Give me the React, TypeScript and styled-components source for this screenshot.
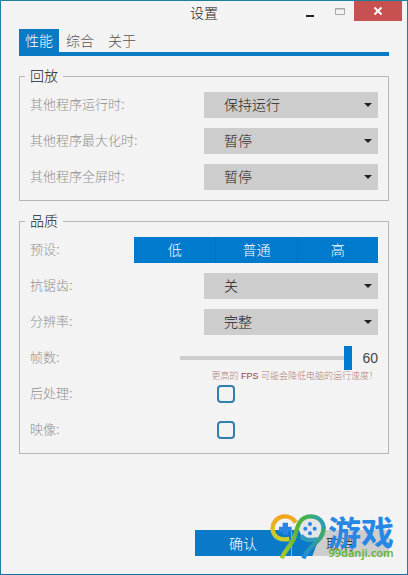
import React, { useState } from "react";
import styled, { createGlobalStyle } from "styled-components";

const Global = createGlobalStyle`
  * { box-sizing: border-box; }
  body { margin: 0; background: #f3f3f3; }
  body, button, select, input {
    font-family: "Liberation Sans", "Noto Sans CJK SC", sans-serif;
    font-weight: 300;
  }
`;

const Window = styled.div`
  min-height: 100vh;
  display: flex;
  flex-direction: column;
  background: #f3f3f3;
  border: 1px solid #1c7f9c;
  border-bottom-color: #1270b0;
`;

const TitleBar = styled.header`
  display: grid;
  grid-template-columns: 1fr auto 1fr;
  height: 28px;
`;

const Title = styled.h1`
  grid-column: 2;
  margin: 0;
  font-size: 14px;
  line-height: 24px;
  font-weight: 300;
  color: #222;
`;

const WindowButtons = styled.div`
  display: flex;
  justify-content: flex-end;
  margin-right: 5px;
`;

const WindowButton = styled.button<{ $close?: boolean }>`
  display: flex;
  align-items: center;
  justify-content: center;
  width: ${(p) => (p.$close ? 48 : 29)}px;
  height: 20px;
  padding: 0;
  border: 0;
  background: ${(p) => (p.$close ? "#c75050" : "transparent")};
`;

const Tabs = styled.nav`
  display: flex;
  margin: 0 18px;
  border-bottom: 4px solid #0a7ac4;
`;

const Tab = styled.button<{ $active: boolean }>`
  height: 23px;
  padding: 2px 6px 0;
  border: 0;
  font-size: 14px;
  line-height: 21px;
  width: ${(p) => (p.$active ? 40 : 42)}px;
  white-space: nowrap;
  background: ${(p) => (p.$active ? "#0a7ac4" : "transparent")};
  color: ${(p) => (p.$active ? "#fff" : "#555")};
`;

const Panels = styled.main`
  display: flex;
  flex-direction: column;
  gap: 10px;
  margin: 10px 18px 0;
`;

const Group = styled.fieldset`
  min-width: 0;
  margin: 0;
  padding: 1px 10px 5px;
  border: 1px solid #b4b8b8;
`;

const Legend = styled.legend`
  margin-left: -5px;
  padding: 0 5px;
  font-size: 14px;
  line-height: 20px;
  color: #222;
`;

const Row = styled.div`
  display: flex;
  align-items: center;
  justify-content: space-between;
  height: 36px;
`;

const Label = styled.label`
  font-size: 13px;
  line-height: 20px;
  color: #909090;
  white-space: nowrap;
`;

const SelectBox = styled.div`
  display: grid;
  align-items: center;
  width: 174px;
  height: 26px;
  background: #cdcdcd;
  > * { grid-area: 1 / 1; }
  > svg { justify-self: end; margin-right: 6px; pointer-events: none; }
`;

const Select = styled.select`
  width: 100%;
  height: 26px;
  padding: 0 20px;
  border: 0;
  appearance: none;
  background: transparent;
  font-size: 14px;
  color: #222;
`;

const Segments = styled.div`
  display: grid;
  grid-template-columns: repeat(3, 1fr);
  width: 244px;
  height: 26px;
`;

const Segment = styled.button`
  padding: 0;
  border: 0;
  background: #007acc;
  color: #fff;
  font-size: 14px;
  line-height: 26px;
  & + & { border-left: 1px solid #0872bb; }
`;

const SliderArea = styled.div`
  display: grid;
  grid-template-columns: 172px 26px;
  align-items: center;
  height: 36px;
`;

const Slider = styled.input`
  width: 172px;
  height: 24px;
  margin: 0;
  appearance: none;
  background: transparent;
  &::-webkit-slider-runnable-track { height: 4px; background: #cdcdcd; }
  &::-webkit-slider-thumb {
    appearance: none;
    width: 8px;
    height: 24px;
    margin-top: -10px;
    background: #007acc;
  }
`;

const Value = styled.output`
  font-size: 14px;
  line-height: 20px;
  text-align: right;
  color: #444;
`;

const Warning = styled.p`
  height: 0;
  margin: 0;
  display: flex;
  align-items: center;
  justify-content: flex-end;
  font-size: 9px;
  line-height: 12px;
  color: #b08078;
  white-space: pre;
  b { font-weight: 400; color: #a03c38; }
`;

const CheckSlot = styled.div`
  width: 161px;
  height: 18px;
`;

const Check = styled.input`
  display: block;
  width: 18px;
  height: 18px;
  margin: 0;
  appearance: none;
  border: 2px solid #3280b0;
  border-radius: 4px;
  &:checked { background: #007acc; }
`;

const Footer = styled.footer`
  display: flex;
  justify-content: flex-end;
  margin: auto 18px 18px;
  position: relative;
`;

const Action = styled.button<{ $primary?: boolean }>`
  width: ${(p) => (p.$primary ? 96 : 98)}px;
  height: 26px;
  padding: 0;
  border: 0;
  font-size: 14px;
  background: ${(p) => (p.$primary ? "#0a7ac8" : "#cdcdcd")};
  color: ${(p) => (p.$primary ? "#fff" : "#222")};
`;

const Brand = styled.div`
  position: absolute;
  right: -6px;
  bottom: -6px;
  display: flex;
  align-items: flex-end;
  pointer-events: none;
`;

const BrandText = styled.div`
  width: 68px;
  display: flex;
  flex-direction: column;
  align-items: center;
  padding-bottom: 2px;
`;

const BrandName = styled.span`
  font: 700 33px/30px "Noto Sans CJK SC", sans-serif;
  color: #2687e4;
  white-space: nowrap;
`;

const BrandUrl = styled.span`
  font: 600 11px/14px "Noto Sans", sans-serif;
  color: #64b832;
`;

function Minimize() {
  return <svg width="10" height="16" aria-hidden="true"><path d="M0 12h8v2H0z" fill="#222" /></svg>;
}

function Maximize() {
  return <svg width="12" height="9" aria-hidden="true"><path d="M1.5 1.5h9v6h-9zM1 2h10" fill="none" stroke="#a3a8ad" /></svg>;
}

function Close() {
  return <svg width="10" height="10" aria-hidden="true"><path d="m1.5 1.5 7 7m0-7-7 7" stroke="#fff" strokeWidth="2" /></svg>;
}

function Logo() {
  return (
    <svg width="62" height="54" viewBox="0 0 186 162" aria-hidden="true">
      <defs>
        <linearGradient id="warm" x1="0" y1="0" x2="0" y2="1">
          <stop offset="0" stopColor="#f3a51c" />
          <stop offset="1" stopColor="#c9cf2a" />
        </linearGradient>
        <linearGradient id="arch" gradientUnits="userSpaceOnUse" x1="50" y1="120" x2="180" y2="90">
          <stop offset="0" stopColor="#a5c82c" />
          <stop offset=".45" stopColor="#55b53a" />
          <stop offset=".75" stopColor="#3fae5c" />
          <stop offset="1" stopColor="#2f9fb0" />
        </linearGradient>
        <linearGradient id="leg" x1="1" y1="0" x2="0" y2="1">
          <stop offset="0" stopColor="#3fae5c" />
          <stop offset="1" stopColor="#2188e2" />
        </linearGradient>
      </defs>
      <path d="M80 66h26l4 30h50l-18 48H80z" fill="#0a7ac8" />
      <circle cx="136" cy="60" r="34" fill="#e3e5e6" />
      <g fill="none" strokeWidth="13">
        <path d="M93 43C84 31 72 25 60 25 39 25 23 41 23 61c0 23 17 37 50 32" stroke="url(#warm)" />
        <path d="M108 82c8 13 26 17 48 11" stroke="#2e9dbb" />
        <path d="M176 58c0 32-24 45-40 62-9 9-16 19-21 31" stroke="url(#leg)" />
        <path d="M50 151C60 124 78 116 88 88c8-24 12-63 48-63 24 0 40 15 40 37" stroke="url(#arch)" />
      </g>
      <path d="M53 44h16v12h11v15H69v9H53v-9H42V56h11z" fill="#2885e4" />
      <g fill="#2885e4">
        <circle cx="135" cy="48" r="6" />
        <circle cx="121" cy="62" r="6" />
        <circle cx="149" cy="62" r="6" />
        <circle cx="135" cy="76" r="6" />
      </g>
    </svg>
  );
}

function Choice({ id, label, options }: { id: string; label: string; options: string[] }) {
  return (
    <Row>
      <Label htmlFor={id}>{label}</Label>
      <SelectBox>
        <Select id={id}>{options.map((o) => <option key={o}>{o}</option>)}</Select>
        <svg width="8" height="4" aria-hidden="true"><path d="M0 0h8L4 4z" fill="#222" /></svg>
      </SelectBox>
    </Row>
  );
}

function Toggle({ id, label }: { id: string; label: string }) {
  return (
    <Row>
      <Label htmlFor={id}>{label}</Label>
      <CheckSlot><Check id={id} type="checkbox" /></CheckSlot>
    </Row>
  );
}

export default function App() {
  const [tab, setTab] = useState("性能");
  const [fps, setFps] = useState(60);
  return (
    <>
      <Global />
      <Window>
        <TitleBar>
          <Title>设置</Title>
          <WindowButtons>
            <WindowButton aria-label="最小化"><Minimize /></WindowButton>
            <WindowButton aria-label="最大化"><Maximize /></WindowButton>
            <WindowButton $close aria-label="关闭"><Close /></WindowButton>
          </WindowButtons>
        </TitleBar>
        <Tabs>
          {["性能", "综合", "关于"].map((t) => (
            <Tab key={t} $active={t === tab} onClick={() => setTab(t)}>{t}</Tab>
          ))}
        </Tabs>
        <Panels>
          <Group>
            <Legend>回放</Legend>
            <Choice id="running" label="其他程序运行时:" options={["保持运行", "暂停"]} />
            <Choice id="maximized" label="其他程序最大化时:" options={["暂停", "保持运行"]} />
            <Choice id="fullscreen" label="其他程序全屏时:" options={["暂停", "保持运行"]} />
          </Group>
          <Group>
            <Legend>品质</Legend>
            <Row>
              <Label as="span" id="preset">预设:</Label>
              <Segments role="group" aria-labelledby="preset">
                <Segment>低</Segment><Segment>普通</Segment><Segment>高</Segment>
              </Segments>
            </Row>
            <Choice id="antialias" label="抗锯齿:" options={["关", "开"]} />
            <Choice id="resolution" label="分辨率:" options={["完整", "一半"]} />
            <Row>
              <Label htmlFor="fps">帧数:</Label>
              <SliderArea>
                <Slider id="fps" type="range" min="10" max="60" value={fps} onChange={(e) => setFps(Number(e.target.value))} />
                <Value htmlFor="fps">{fps}</Value>
              </SliderArea>
            </Row>
            <Warning>更高的 <b>FPS</b> 可能会降低电脑的运行速度！</Warning>
            <Toggle id="post" label="后处理:" />
            <Toggle id="reflection" label="映像:" />
          </Group>
        </Panels>
        <Footer>
          <Action $primary>确认</Action>
          <Action>取消</Action>
          <Brand>
            <Logo />
            <BrandText><BrandName>游戏</BrandName><BrandUrl>99danji.com</BrandUrl></BrandText>
          </Brand>
        </Footer>
      </Window>
    </>
  );
}
